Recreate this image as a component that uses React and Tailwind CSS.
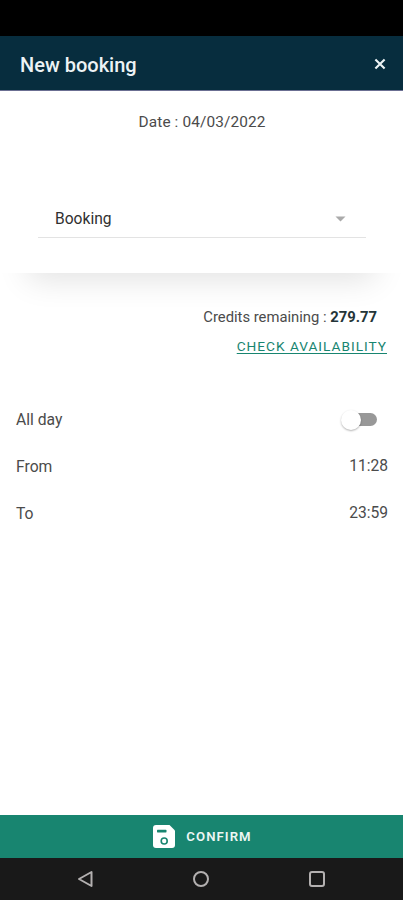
import React from 'react';

const SaveIcon = () => (
  <svg className="h-[23px] w-[22px]" viewBox="0 0 22 23" fill="none">
    <path
      d="M3 0H16.5L22 5.5V20a3 3 0 0 1-3 3H3a3 3 0 0 1-3-3V3a3 3 0 0 1 3-3Z"
      fill="#ffffff"
    />
    <rect x="4" y="4.8" width="9.5" height="2.6" rx="0.6" fill="#188570" />
    <circle cx="11.2" cy="16" r="3" stroke="#188570" strokeWidth="1.6" />
  </svg>
);

const Header = () => (
  <header className="flex h-[55px] items-center justify-between border-b border-[#6b6f92] bg-[#072d3e] pr-[17px] pl-5">
    <h1 className="mt-[3px] text-[20px] leading-6 font-medium text-[#edf3f5]">New booking</h1>
    <button type="button" aria-label="Close" className="mt-[2px]">
      <svg className="h-3 w-3" viewBox="0 0 12 12" fill="none" stroke="#edf3f5" strokeWidth="2.1">
        <path d="M1.4 1.4L10.6 10.6M10.6 1.4L1.4 10.6" />
      </svg>
    </button>
  </header>
);

const Row = ({ label, children }) => (
  <div className="flex h-[47px] items-center justify-between pr-[15px] pl-4">
    <span className="text-[15.7px]">{label}</span>
    {children}
  </div>
);

const Toggle = () => (
  <button
    type="button"
    role="switch"
    aria-checked="false"
    aria-label="All day"
    className="mr-[11px] flex h-[13px] w-8 items-center rounded-full bg-[#989898]"
  >
    <span className="-ml-[4px] h-5 w-5 shrink-0 rounded-full bg-white shadow-[0_1px_2px_rgba(0,0,0,0.3)]" />
  </button>
);

const NavigationBar = () => (
  <nav className="flex h-[42px] items-center bg-[#191919] pl-[76px]">
    <svg className="h-5 w-[250px]" viewBox="0 0 250 20" fill="none" stroke="#b3b0b0" strokeWidth="2">
      <path d="M3 10L15.5 3V17Z" strokeLinejoin="round" />
      <circle cx="125" cy="10" r="7" />
      <rect x="234" y="3" width="14" height="14" rx="2" />
    </svg>
  </nav>
);

export default function App() {
  return (
    <div className="flex h-[900px] w-[403px] flex-col overflow-hidden bg-white font-[Roboto,sans-serif] text-[15px] leading-5 text-[#4b4b4b]">
      <div className="h-9 shrink-0 bg-black" />
      <Header />

      {/* Booking type */}
      <section className="relative h-[182px] shrink-0 bg-white px-[38px] pt-[21px]">
        <p className="pl-px text-center text-[15.4px] tracking-[0.12px]">Date : 04/03/2022</p>
        <button
          type="button"
          className="mt-[66px] flex h-[40px] w-[328px] items-center justify-between border-b border-[#e3e3e3] pr-5 pl-[17px] text-[15.6px] text-[#303030]"
        >
          <span className="mt-[3px]">Booking</span>
          <svg className="mt-[3px] h-[6px] w-[11px]" viewBox="0 0 11 6" fill="#aaaaaa">
            <path d="M0.5 0.5H10.5L5.5 5.5Z" />
          </svg>
        </button>
        <div className="absolute top-full left-0 h-10 w-full overflow-hidden">
          <div className="mx-7 -mt-10 h-10 shadow-[0_6px_32px_rgba(0,0,0,0.12)]" />
        </div>
      </section>

      {/* Credits */}
      <section className="relative flex flex-col items-end pt-[34px] pr-4">
        <p className="pr-[10px] text-[14.8px]">
          Credits remaining : <strong className="font-bold text-[#243538]">279.77</strong>
        </p>
        <button
          type="button"
          className="mt-[9px] text-[13.7px] tracking-[0.98px] text-[#188570] underline underline-offset-2"
        >
          CHECK AVAILABILITY
        </button>
      </section>

      {/* Time range */}
      <section className="mt-[40px] flex-1">
        <Row label="All day">
          <Toggle />
        </Row>
        <Row label="From">
          <span className="-mt-[2px] text-[15.6px]">11:28</span>
        </Row>
        <Row label="To">
          <span className="-mt-[2px] text-[15.6px]">23:59</span>
        </Row>
      </section>

      <button
        type="button"
        className="flex h-[43px] shrink-0 items-center justify-center gap-[11px] bg-[#188570] pl-[2px] text-[13.2px] font-semibold tracking-[1.05px] text-[#edf7f4]"
      >
        <SaveIcon />
        CONFIRM
      </button>
      <NavigationBar />
    </div>
  );
}
